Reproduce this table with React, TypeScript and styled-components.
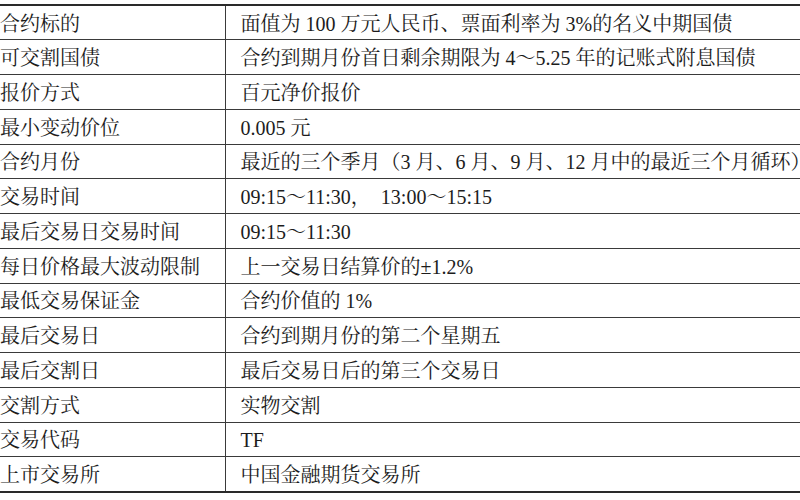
import React from "react";
import styled, { createGlobalStyle } from "styled-components";

const GlobalStyle = createGlobalStyle`
  html, body {
    margin: 0;
    padding: 0;
    background: #ffffff;
    overflow: hidden;
  }
  body {
    width: 800px;
    height: 500px;
  }
`;

const Page = styled.div`
  width: 800px;
  height: 500px;
  overflow: hidden;
  padding-top: 4px;
  box-sizing: border-box;
  background: #ffffff;
`;

const Table = styled.table`
  width: 900px;
  table-layout: fixed;
  border-collapse: collapse;
  border-top: 2px solid #2a2a2a;
  border-bottom: 2px solid #2a2a2a;
  font-family: "Liberation Serif", "Noto Serif CJK SC", "Noto Sans CJK SC", serif;
  font-size: 20px;
  color: #1c1c1c;
`;

const Row = styled.tr`
  height: 34.75px;
  border-top: 1px solid #3a3a3a;
  &:first-child {
    border-top: none;
  }
`;

const LabelCell = styled.td`
  width: 225px;
  padding: 2px 0 0 0;
  box-sizing: border-box;
  border-right: 1px solid #3a3a3a;
  white-space: nowrap;
  overflow: hidden;
  vertical-align: middle;
  line-height: 1;
`;

const ValueCell = styled.td`
  padding: 2px 0 0 15px;
  white-space: nowrap;
  overflow: hidden;
  vertical-align: middle;
  line-height: 1;
`;

const rows: [string, string][] = [
  ["合约标的", "面值为 100 万元人民币、票面利率为 3%的名义中期国债"],
  ["可交割国债", "合约到期月份首日剩余期限为 4～5.25 年的记账式附息国债"],
  ["报价方式", "百元净价报价"],
  ["最小变动价位", "0.005 元"],
  ["合约月份", "最近的三个季月（3 月、6 月、9 月、12 月中的最近三个月循环）"],
  ["交易时间", "09:15～11:30，\u00a0\u00a013:00～15:15"],
  ["最后交易日交易时间", "09:15～11:30"],
  ["每日价格最大波动限制", "上一交易日结算价的±1.2%"],
  ["最低交易保证金", "合约价值的 1%"],
  ["最后交易日", "合约到期月份的第二个星期五"],
  ["最后交割日", "最后交易日后的第三个交易日"],
  ["交割方式", "实物交割"],
  ["交易代码", "TF"],
  ["上市交易所", "中国金融期货交易所"],
];

export default function App() {
  return (
    <>
      <GlobalStyle />
      <Page>
        <Table>
          <tbody>
            {rows.map(([label, value]) => (
              <Row key={label}>
                <LabelCell>{label}</LabelCell>
                <ValueCell>{value}</ValueCell>
              </Row>
            ))}
          </tbody>
        </Table>
      </Page>
    </>
  );
}
